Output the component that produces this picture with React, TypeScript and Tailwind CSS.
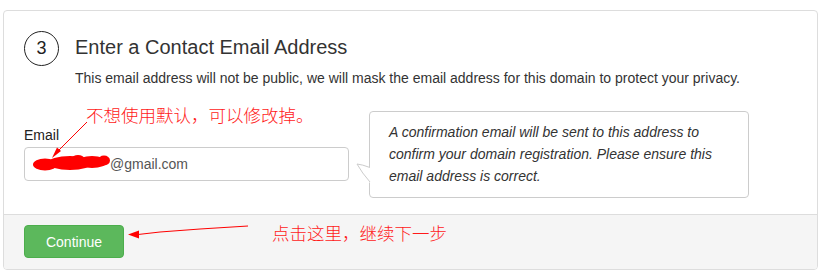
import React from "react";

export default function App() {
  return (
    <div className="relative w-[819px] h-[270px] bg-white pt-[10px] pl-[3px] pr-[1px] font-['Liberation_Sans',Arial,sans-serif] text-[#333]">
      <div className="h-[260px] border border-[#dddddd] rounded-[4px] flex flex-col overflow-hidden">
        <div className="h-[203px] pt-[20px] px-[20px]">
          <div className="flex items-start">
            <div className="w-[35px] h-[35px] rounded-full border border-[#222] flex items-center justify-center text-[18px] text-[#222] shrink-0">
              3
            </div>
            <div className="ml-[16px]">
              <h2 className="mt-[5px] text-[20px] leading-[22px] text-[#333]">Enter a Contact Email Address</h2>
              <p className="mt-[10px] text-[14px] leading-[20px] text-[#333]">
                This email address will not be public, we will mask the email address for this domain to protect your privacy.
              </p>
            </div>
          </div>
          <div className="flex items-start mt-[23px]">
            <div className="w-[325px] mt-[14px] shrink-0">
              <label className="block text-[14px] leading-[20px] text-[#222] mb-[2px]">Email</label>
              <div className="h-[34px] border border-[#cccccc] rounded-[4px] px-[12px] flex items-center text-[14px] leading-[20px] text-[#555]">
                <span className="inline-block w-[73px]"></span>
                <span>@gmail.com</span>
              </div>
            </div>
            <div className="relative ml-[20px] w-[380px] border border-[#cccccc] rounded-[4px] pt-[9px] pb-[10px] pl-[19px] pr-[10px] text-[14px] leading-[22px] italic text-[#333] bg-white">
              <svg className="absolute left-[-14px] top-[51px]" width="16" height="24" viewBox="0 0 16 24">
                <path d="M14 4.5 Q 6 1.5 1 1 Q 6 10 14 19 Z" fill="#ffffff" />
                <rect x="13" y="4" width="3" height="15.5" fill="#ffffff" />
                <path d="M14 4.5 Q 6 1.5 1 1 Q 6 10 14 19" fill="none" stroke="#cccccc" strokeWidth="1" />
              </svg>
              A confirmation email will be sent to this address to
              <br />
              confirm your domain registration. Please ensure this
              <br />
              email address is correct.
            </div>
          </div>
        </div>
        <div className="flex-1 border-t border-[#dddddd] bg-[#f5f5f5] pt-[10px] px-[20px]">
          <button className="w-[100px] h-[33px] rounded-[4px] bg-[#5cb85c] border border-[#4cae4c] text-white text-[14px] leading-[20px]">
            Continue
          </button>
        </div>
      </div>

      <div className="absolute left-[86px] top-[106px] text-[17.5px] leading-[17.5px] text-[#ff1a1a] font-['Noto_Sans_CJK_SC',sans-serif] font-light whitespace-nowrap">
        不想使用默认，可以修改掉。
      </div>
      <div className="absolute left-[272px] top-[224px] text-[17.5px] leading-[17.5px] text-[#ff1a1a] font-['Noto_Sans_CJK_SC',sans-serif] font-light whitespace-nowrap">
        点击这里，继续下一步
      </div>

      <svg className="absolute left-0 top-0 pointer-events-none" width="819" height="270" viewBox="0 0 819 270">
        <g fill="#ff0000">
          <ellipse cx="45" cy="164.5" rx="12" ry="6" />
          <ellipse cx="70" cy="163" rx="22" ry="7" />
          <ellipse cx="92" cy="162" rx="15" ry="6" />
          <ellipse cx="104" cy="160.5" rx="6" ry="5" />
          <ellipse cx="78" cy="158" rx="6" ry="3" />
        </g>
        <line x1="87" y1="122" x2="57" y2="152" stroke="#ff0000" strokeWidth="1" />
        <polygon points="52,158 61,151 57,147.5" fill="#ff0000" />
        <polyline points="248,226 200,229 160,232 138,234.5" fill="none" stroke="#ff0000" strokeWidth="1" />
        <polygon points="128,234.5 139,230.5 139,238.5" fill="#ff0000" />
      </svg>
    </div>
  );
}
